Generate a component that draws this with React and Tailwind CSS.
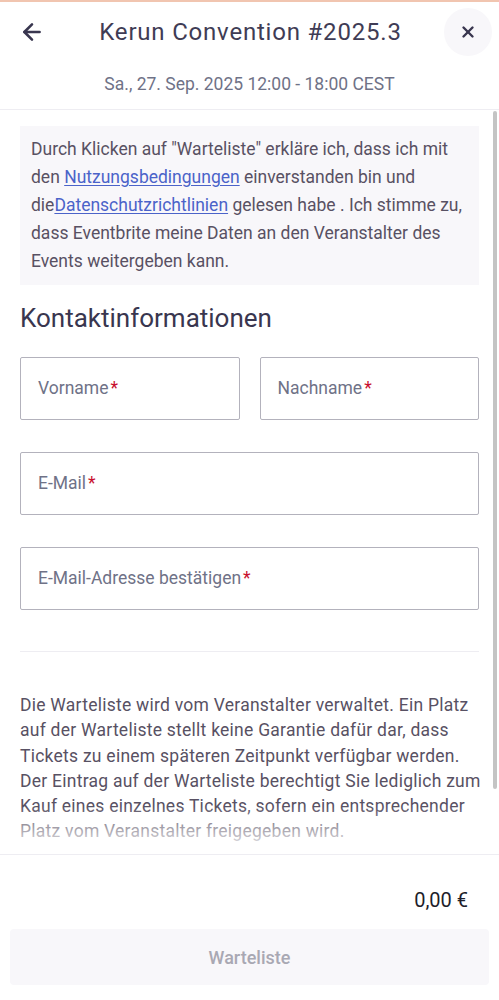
import { ArrowLeft, X } from 'lucide-react';

const fields = [
  [{ label: 'Vorname' }, { label: 'Nachname' }],
  [{ label: 'E-Mail' }],
  [{ label: 'E-Mail-Adresse bestätigen' }],
];

const Field = ({ label }) => (
  <div className="flex-1 h-[63px] border border-[#b3b2bc] rounded-[2px] flex items-center pl-[17px]">
    <span className="text-[17.5px] text-[#6f7287]">
      {label}
      <span className="text-[#c8102e] ml-[2px]">*</span>
    </span>
  </div>
);

const App = () => {
  return (
    <div
      className="h-[1000px] flex flex-col bg-white text-[#39364f] overflow-hidden"
      style={{ fontFamily: 'Roboto, "Noto Sans", Arial, sans-serif' }}
    >
      <div className="h-[2px] bg-[#f1c5b0]" />

      {/* header */}
      <div className="h-[60px] flex items-center justify-between pl-[19px] pr-[7px]">
        <ArrowLeft size={26} strokeWidth={2.4} className="text-[#39364f]" />
        <h1 className="text-[24px] tracking-[0.8px] leading-none text-[#3f3c55] ml-[12px]">Kerun Convention #2025.3</h1>
        <button className="w-[48px] h-[48px] rounded-full bg-[#f8f7fa] flex items-center justify-center">
          <X size={18} strokeWidth={3.2} className="text-[#39364f]" />
        </button>
      </div>
      <div className="h-[48px] flex items-center justify-center border-b border-[#eeedf2] pb-[2px]">
        <span className="text-[17.5px] text-[#6f7287]">Sa., 27. Sep. 2025 12:00 - 18:00 CEST</span>
      </div>

      {/* scrolling content */}
      <div className="relative flex-1 overflow-hidden">
        <div className="px-5 pt-4">
          <div className="bg-[#f8f7fa] px-[11px] pt-[9px] pb-[10px] text-[17.5px] leading-[28px] text-[#585163]">
            Durch Klicken auf "Warteliste" erkläre ich, dass ich mit den{' '}
            <a className="text-[#4b63c9] underline underline-offset-2">Nutzungsbedingungen</a> einverstanden bin und
            die<a className="text-[#4b63c9] underline underline-offset-2">Datenschutzrichtlinien</a> gelesen habe . Ich
            stimme zu, dass Eventbrite meine Daten an den Veranstalter des Events weitergeben kann.
          </div>

          <h2 className="mt-[17px] text-[26px] leading-[32px] text-[#39364f]">Kontaktinformationen</h2>

          <div className="mt-[23px] flex flex-col gap-[32px]">
            {fields.map((row, i) => (
              <div key={i} className="flex gap-5">
                {row.map((f) => (
                  <Field key={f.label} label={f.label} />
                ))}
              </div>
            ))}
          </div>

          <div className="mt-[41px] border-t border-[#eeedf2]" />

          <p className="mt-[41px] -mr-2 text-[17.5px] tracking-[0.25px] leading-[25.3px] text-[#585163]">
            Die Warteliste wird vom Veranstalter verwaltet. Ein Platz auf der Warteliste stellt keine Garantie dafür
            dar, dass Tickets zu einem späteren Zeitpunkt verfügbar werden. Der Eintrag auf der Warteliste berechtigt
            Sie lediglich zum Kauf eines einzelnes Tickets, sofern ein entsprechender Platz vom Veranstalter freigegeben
            wird.
          </p>
        </div>

        {/* fade + scrollbar overlays */}
        <div className="absolute left-0 right-0 bottom-0 h-[48px] bg-gradient-to-b from-white/0 to-white" />
        <div className="absolute right-[2px] top-[1px] w-[4px] h-[678px] bg-[#c4c4c4] rounded-full" />
      </div>

      {/* footer */}
      <div className="border-t border-[#eeedf2] pt-[33px] pb-[15px] px-[10px]">
        <div className="text-right pr-[21px] text-[20px] leading-6 text-[#1e1e2a]">0,00 €</div>
        <button className="mt-[17px] w-full h-[56px] rounded-[4px] bg-[#f8f7fa] text-[18px] font-medium text-[#a9a8b3]">
          Warteliste
        </button>
      </div>
    </div>
  );
};

export default App;
